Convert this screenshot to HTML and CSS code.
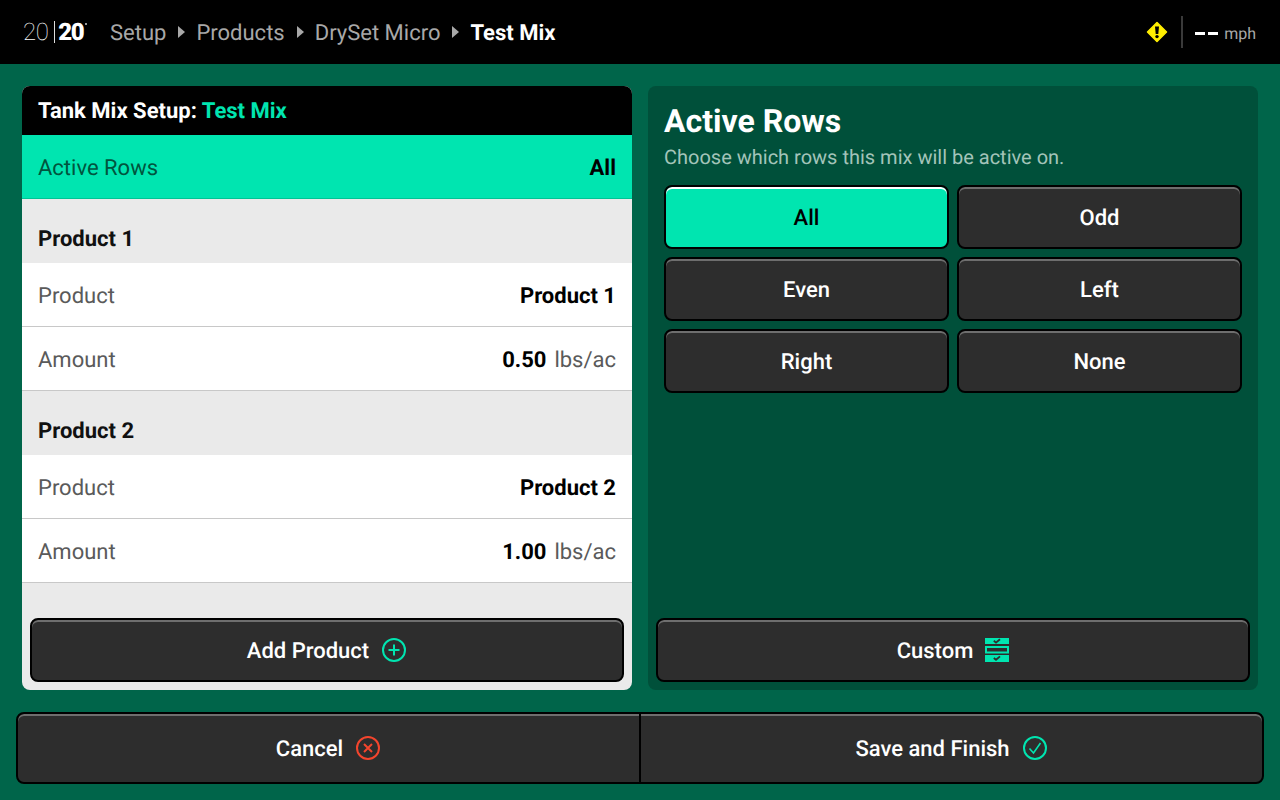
FILE: index.html
```html
<!DOCTYPE html>
<html lang="en">
<head>
<meta charset="utf-8">
<title>Test Mix</title>
<link rel="stylesheet" href="styles.css">
</head>
<body>
<header class="topbar">
  <div class="logo"><span class="logo-thin">20</span><span class="logo-sep"></span><span class="logo-bold">20</span><span class="logo-reg"></span></div>
  <nav class="crumbs">
    <span>Setup</span><i class="tri"></i>
    <span>Products</span><i class="tri"></i>
    <span>DrySet Micro</span><i class="tri"></i>
    <span class="current">Test Mix</span>
  </nav>
  <div class="status">
    <svg class="warn" width="22" height="22" viewBox="0 0 22 22"><path d="M11 1.5 L20.5 11 L11 20.5 L1.5 11 Z" fill="#ffee00" stroke="#ffee00" stroke-width="1.5" stroke-linejoin="round"/><path d="M9 5.5h4l-.7 7.5h-2.6z" fill="#000"/><circle cx="11" cy="15.6" r="1.7" fill="#000"/></svg>
    <span class="vsep"></span>
    <span class="dashes"><b></b><b></b></span>
    <span class="unit">mph</span>
  </div>
</header>

<main class="content">
  <section class="card">
    <h2 class="card-title">Tank Mix Setup: <em>Test Mix</em></h2>
    <div class="row row-active"><span>Active Rows</span><strong>All</strong></div>
    <h3 class="group">Product 1</h3>
    <div class="row"><span>Product</span><strong>Product 1</strong></div>
    <div class="row"><span>Amount</span><div><strong>0.50</strong><small>lbs/ac</small></div></div>
    <h3 class="group">Product 2</h3>
    <div class="row"><span>Product</span><strong>Product 2</strong></div>
    <div class="row"><span>Amount</span><div><strong>1.00</strong><small>lbs/ac</small></div></div>
    <div class="card-foot">
      <button class="btn btn-wide">Add Product
        <svg width="26" height="26" viewBox="0 0 26 26" fill="none" stroke="#00e5b0" stroke-width="2"><circle cx="13" cy="13" r="11"/><path d="M13 7.5v11M7.5 13h11"/></svg>
      </button>
    </div>
  </section>

  <section class="panel">
    <h1>Active Rows</h1>
    <p>Choose which rows this mix will be active on.</p>
    <div class="choices">
      <button class="btn selected">All</button>
      <button class="btn">Odd</button>
      <button class="btn">Even</button>
      <button class="btn">Left</button>
      <button class="btn">Right</button>
      <button class="btn">None</button>
    </div>
    <div class="panel-foot">
      <button class="btn btn-wide">Custom
        <svg width="24" height="24" viewBox="0 0 24 24"><rect width="24" height="6" fill="#00e5b0"/><rect x="1" y="9" width="22" height="5.5" fill="none" stroke="#00e5b0" stroke-width="2"/><rect y="17" width="24" height="7" fill="#00e5b0"/><path d="M8.8 2.8l2.2 1.8 4-3.4M8.8 20l2.2 1.8 4-3.4" fill="none" stroke="#2d2d2d" stroke-width="1.8"/></svg>
      </button>
    </div>
  </section>
</main>

<footer class="actions">
  <button class="btn btn-action">Cancel
    <svg width="26" height="26" viewBox="0 0 26 26" fill="none" stroke="#f4452d" stroke-width="2"><circle cx="13" cy="13" r="11"/><path d="M9 9l8 8M17 9l-8 8"/></svg>
  </button>
  <button class="btn btn-action">Save and Finish
    <svg width="26" height="26" viewBox="0 0 26 26" fill="none" stroke="#00e5b0" stroke-width="2"><circle cx="13" cy="13" r="11"/><path d="M7.5 13.5l4 4.5 7-10" stroke-width="1.6"/></svg>
  </button>
</footer>
</body>
</html>
```
FILE: styles.css
```css
* { box-sizing: border-box; }
html, body { margin: 0; height: 100%; }
body {
  width: 1280px;
  height: 800px;
  overflow: hidden;
  background: #00654a;
  font-family: Roboto, "Liberation Sans", sans-serif;
  text-rendering: geometricPrecision;
  display: flex;
  flex-direction: column;
}
.topbar {
  height: 64px;
  background: #000;
  display: flex;
  align-items: center;
  padding: 0 24px 0 23px;
  flex: none;
}
.logo {
  width: 87px;
  display: flex;
  align-items: center;
  font-size: 24px;
  line-height: 24px;
  color: #fff;
}
.logo-thin { font-weight: 100; letter-spacing: -0.5px; }
.logo-bold { font-weight: 900; letter-spacing: -1.5px; }
.logo-sep { width: 1px; height: 22px; background: #ddd; margin: 0 3px 0 6px; }
.logo-reg { width: 2px; height: 2px; background: #999; margin: -16px 0 0 2px; }
.crumbs {
  display: flex;
  align-items: center;
  font-size: 22px;
  padding-top: 2px;
  color: #a8a8a8;
}
.tri {
  width: 0;
  height: 0;
  border-left: 7px solid #a8a8a8;
  border-top: 6px solid transparent;
  border-bottom: 6px solid transparent;
  margin: -2px 11px 0 12px;
}
.current { color: #fff; font-weight: 700; }
.status {
  margin-left: auto;
  display: flex;
  align-items: center;
}
.warn { margin-right: 13px; }
.vsep { width: 2px; height: 32px; background: #3a3a3a; margin-right: 12px; }
.dashes { display: flex; gap: 3px; margin: 2px 6px 0 0; }
.dashes b { width: 10px; height: 3px; background: #fff; }
.unit { font-size: 16px; padding-top: 2px; color: #a8a8a8; }

.content {
  height: 604px;
  margin-top: 22px;
  padding: 0 22px;
  display: flex;
  gap: 16px;
  flex: none;
}
.card {
  width: 610px;
  background: #eaeaea;
  border-radius: 8px;
  overflow: hidden;
  display: flex;
  flex-direction: column;
}
.card-title {
  margin: 0;
  height: 49px;
  background: #000;
  color: #fff;
  font-size: 22px;
  font-weight: 700;
  line-height: 51px;
  padding: 0 16px;
}
.card-title em { font-style: normal; color: #00e5b0; }
.row {
  height: 64px;
  flex: none;
  background: #fff;
  border-bottom: 1px solid #c8c8c8;
  display: flex;
  align-items: center;
  justify-content: space-between;
  padding: 3px 16px 0;
  font-size: 22px;
  color: #5a5a5a;
}
.row strong { color: #000; font-weight: 700; }
.row small { font-size: 22px; margin-left: 8px; }
.row-active { background: #00e5b0; color: #00553e; border-bottom-color: #00c496; }
.group {
  margin: 0;
  height: 64px;
  flex: none;
  padding: 28px 16px 0;
  font-size: 22px;
  line-height: 26px;
  font-weight: 700;
  color: #111;
}
.card-foot { margin-top: auto; padding: 0 8px 8px; }

.panel {
  width: 610px;
  background: #00503a;
  border-radius: 8px;
  padding: 0 8px 8px;
  display: flex;
  flex-direction: column;
}
.panel h1 {
  margin: 16px 8px 0;
  font-size: 32px;
  line-height: 38px;
  font-weight: 700;
  color: #fff;
}
.panel p {
  margin: 5px 8px 0;
  font-size: 20px;
  line-height: 24px;
  color: #a3c4b9;
}
.choices {
  margin: 16px 8px 0;
  display: grid;
  grid-template-columns: 1fr 1fr;
  grid-auto-rows: 64px;
  gap: 8px;
}
.panel-foot { margin-top: auto; }

.btn {
  display: flex;
  align-items: center;
  justify-content: center;
  gap: 12px;
  background: #2d2d2d;
  color: #fff;
  font-family: inherit;
  font-size: 22px;
  font-weight: 500;
  text-rendering: geometricPrecision;
  border: 2px solid #000;
  border-radius: 8px;
  box-shadow: inset 0 2px 0 #6e6e6e;
  padding: 2px 0 0;
}
.btn svg { margin-top: -2px; }
.selected {
  background: #00e5b0;
  color: #000;
  box-shadow: inset 0 2px 0 #fff;
}
.btn-wide { width: 100%; height: 64px; }
.actions {
  margin-top: 22px;
  padding: 0 16px;
  display: flex;
  flex: none;
}
.btn-action { flex: 1; height: 72px; }
.btn-action:first-child { border-radius: 8px 0 0 8px; border-right-width: 1px; }
.btn-action:last-child { border-radius: 0 8px 8px 0; border-left-width: 1px; }
```
